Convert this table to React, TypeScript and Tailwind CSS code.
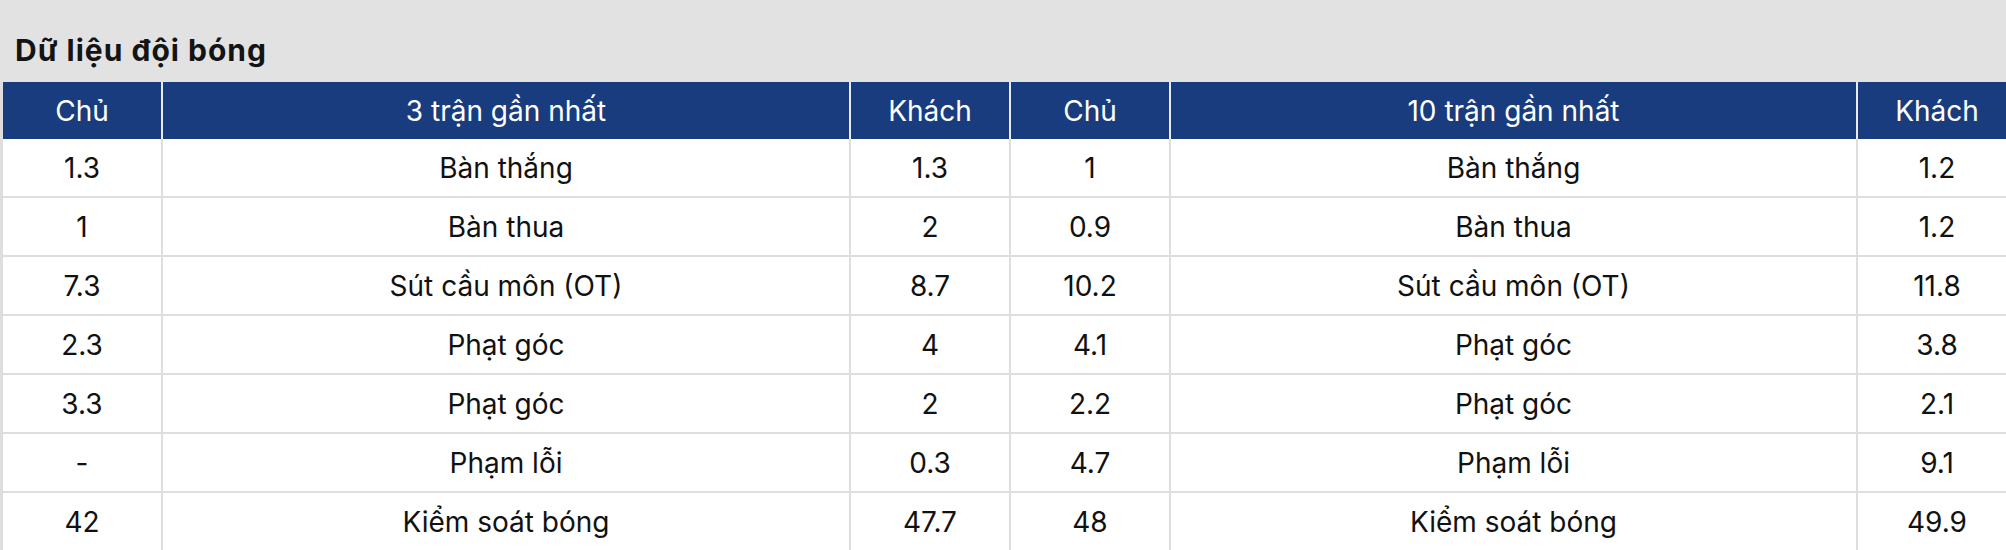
const rows = [
  ['1.3', 'Bàn thắng', '1.3', '1', 'Bàn thắng', '1.2'],
  ['1', 'Bàn thua', '2', '0.9', 'Bàn thua', '1.2'],
  ['7.3', 'Sút cầu môn (OT)', '8.7', '10.2', 'Sút cầu môn (OT)', '11.8'],
  ['2.3', 'Phạt góc', '4', '4.1', 'Phạt góc', '3.8'],
  ['3.3', 'Phạt góc', '2', '2.2', 'Phạt góc', '2.1'],
  ['-', 'Phạm lỗi', '0.3', '4.7', 'Phạm lỗi', '9.1'],
  ['42', 'Kiểm soát bóng', '47.7', '48', 'Kiểm soát bóng', '49.9'],
]

const headers = ['Chủ', '3 trận gần nhất', 'Khách', 'Chủ', '10 trận gần nhất', 'Khách']

const cols = 'grid grid-cols-[158px_686px_158px_158px_685px_158px] gap-x-[2px]'

export default function App() {
  return (
    <div
      className="w-[2020px] bg-[#e2e2e2] overflow-hidden"
      style={{ fontFamily: 'Inter, "Noto Sans", sans-serif' }}
    >
      <div className="h-[82px] flex items-center pt-[17px] pl-[15px]">
        <h1 className="text-[30px] font-bold tracking-[1px] text-[#141414] leading-none">Dữ liệu đội bóng</h1>
      </div>
      <div className="pl-[3px] bg-[#dedede]">
        <div className={`${cols} bg-[#ebebeb]`}>
          {headers.map((h, i) => (
            <div
              key={i}
              className="h-[57px] bg-[#183c7d] text-white text-[28px] flex items-center justify-center"
            >
              {h}
            </div>
          ))}
        </div>
        <div className="flex flex-col gap-y-[2px]">
          {rows.map((r, i) => (
            <div key={i} className={cols}>
              {r.map((c, j) => (
                <div
                  key={j}
                  className="h-[57px] bg-white text-[#111] text-[28px] flex items-center justify-center"
                >
                  {c}
                </div>
              ))}
            </div>
          ))}
        </div>
      </div>
    </div>
  )
}
